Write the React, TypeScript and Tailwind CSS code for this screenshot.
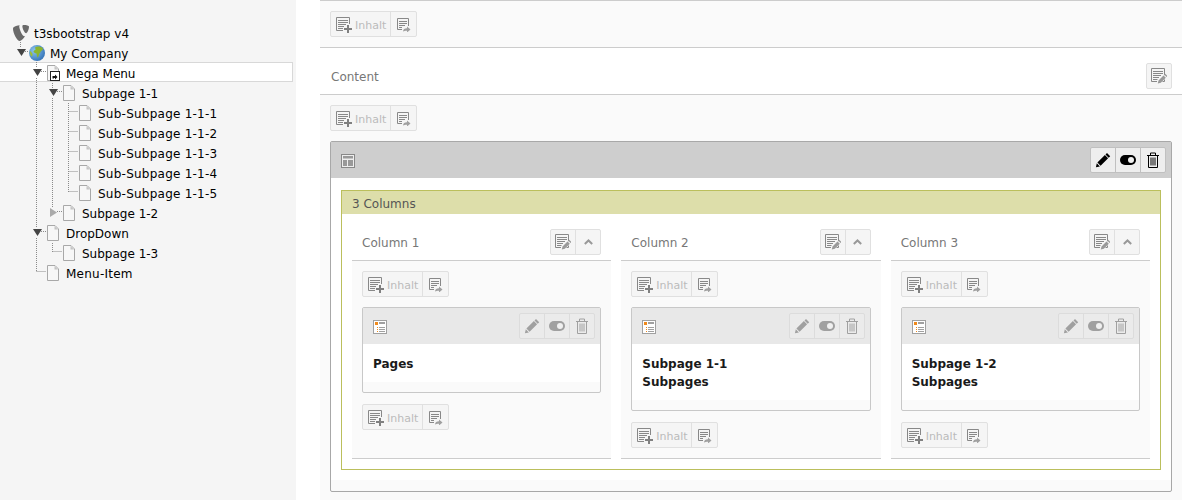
import type { ReactNode } from "react";

const font = "font-['DejaVu_Sans',sans-serif]";

const Lines = ({ size }: { size: number }) => (
  <>
    <path d={`M.5 .5h${size}v${size}h-${size}z`} fill="none" stroke="currentColor" />
    <path
      d={`M2 3.500h${size - 3}M2 5.500h${size - 3}M2 7.500h${size - 5}M2 9.500h${size - 7}M2 11.500h${size - 8}`}
      fill="none"
      stroke="currentColor"
    />
  </>
);

const NewIcon = () => (
  <svg width="16" height="16" viewBox="0 0 16 16" className="mt-[2px] text-[#888]">
    <Lines size={13} />
    <path d="M7 10h9v4H7zM10 7h4v9h-4z" fill="#f5f5f5" />
    <path d="M8 11h8v2H8zM11 8h2v8h-2z" fill="#808080" />
  </svg>
);

const PasteIcon = () => (
  <svg width="14" height="14" viewBox="0 0 14 14" className="mt-[2px] text-[#888]">
    <Lines size={11} />
    <path d="M5 8h9v6H5z" fill="#f5f5f5" />
    <path d="M6 13.500c.3-2.200 1.600-3.200 4-3.200V8.500l3.500 3-3.500 3v-1.700c-1.800 0-3 .2-4 .7z" fill="#a0a0a0" />
  </svg>
);

const EditDocIcon = () => (
  <svg width="16" height="16" viewBox="0 0 16 16" className="text-[#888]">
    <Lines size={13} />
    <path d="M6 12l6-6 4 3-6 6H6z" fill="#f5f5f5" />
    <path d="M12.500 7.500L14.800 9.800 9.800 14.800 6.800 15.500 7.500 12.500zM13.300 6.700l.9-.9 2.300 2.300-.9.9z" fill="#999" />
  </svg>
);

const ChevronUp = () => (
  <svg width="9" height="6" viewBox="0 0 9 6">
    <path d="M.8 5l3.700-3.500L8.200 5" fill="none" stroke="#999" strokeWidth="2" />
  </svg>
);

const Pencil = ({ className }: { className: string }) => (
  <svg width="16" height="16" viewBox="0 0 16 16" className={className}>
    <path
      d="M12 1l3.200 3.200-1.500 1.500-3.200-3.200zM9.900 3.100l3.200 3.200-7.500 7.500-3.200-3.200zM1.800 11.300l3.100 3.100-4 .9zM1.300 13.800l1.100 1.100-1.500.4z"
      fill="currentColor"
    />
  </svg>
);

const Toggle = ({ className }: { className: string }) => (
  <svg width="16" height="16" viewBox="0 0 16 16" className={className}>
    <rect x="0" y="3" width="16" height="10" rx="5" fill="currentColor" />
    <circle cx="11" cy="8" r="3" fill="#f0f0f0" />
  </svg>
);

const Trash = ({ className }: { className: string }) => (
  <svg width="16" height="16" viewBox="0 0 16 16" className={className}>
    <path
      d="M2 3.500h12M5.500 3.500v-2.500h5v2.500M3.500 3.500v12h9v-12M6 5.500v8M8 5.500v8M10 5.500v8"
      fill="none"
      stroke="currentColor"
    />
  </svg>
);

const GridIcon = () => (
  <svg width="14" height="14" viewBox="0 0 14 14" className="mt-[2px]">
    <rect x=".5" y=".5" width="13" height="13" fill="#eee" stroke="#888" />
    <path d="M2 2h10v2.500H2zM2 6h4v6H2zM7 6h5v6H7z" fill="#999" />
  </svg>
);

const ListIcon = () => (
  <svg width="14" height="14" viewBox="0 0 14 14" className="mt-[2px]">
    <rect x=".5" y=".5" width="13" height="13" fill="#fff" stroke="#a0a0a0" />
    <path d="M2 2h3v3H2z" fill="#f08a1c" />
    <path d="M4 7h1v1H4zM4 9h1v1H4zM4 11h1v1H4z" fill="#f08a1c" />
    <path d="M6 2.500h6M6 3.500h6M6 7.500h6M6 9.500h6M6 11.500h6" stroke="#a0a0a0" />
  </svg>
);

const Group = ({ children, tone = "light" }: { children: ReactNode; tone?: "light" | "dark" | "card" }) => {
  const toneClass = {
    light: "divide-[#e0e0e0] border-[#e0e0e0] bg-[#f5f5f5]",
    dark: "divide-[#c0c0c0] border-[#c0c0c0] bg-[#eeeeee]",
    card: "divide-[#dcdcdc] border-[#dcdcdc] bg-[#ebebeb]",
  }[tone];
  return <div className={`flex h-[26px] w-fit divide-x rounded-[2px] border ${toneClass}`}>{children}</div>;
};

const Cell = ({ children }: { children: ReactNode }) => (
  <div className="box-content flex w-[24px] items-center justify-center">{children}</div>
);

const AddBar = () => (
  <Group>
    <div className="flex w-[60px] items-center gap-[3px] pl-[5px]">
      <NewIcon />
      <span className="mt-[4px] text-[11px] text-[#bbbbbb]">Inhalt</span>
    </div>
    <div className="flex w-[25px] items-center justify-center">
      <PasteIcon />
    </div>
  </Group>
);

const cards = [
  { column: "Column 1", lines: ["Pages"] },
  { column: "Column 2", lines: ["Subpage 1-1", "Subpages"] },
  { column: "Column 3", lines: ["Subpage 1-2", "Subpages"] },
];

const Card = ({ lines }: { lines: string[] }) => (
  <div className="mt-[10px] rounded-[2px] border border-[#c8c8c8] bg-[#fafafa] pb-[10px]">
    <div className="flex h-[36px] items-center justify-between bg-[#e8e8e8] pl-[10px] pr-[5px]">
      <ListIcon />
      <Group tone="card">
        <Cell>
          <Pencil className="text-[#a0a0a0]" />
        </Cell>
        <Cell>
          <Toggle className="text-[#a0a0a0]" />
        </Cell>
        <Cell>
          <Trash className="text-[#a0a0a0]" />
        </Cell>
      </Group>
    </div>
    <div className="bg-white pb-[9px] pl-[10px] pt-[11px] text-xs font-bold leading-[18px] text-[#1a1a1a]">
      {lines.map((line) => (
        <div key={line}>{line}</div>
      ))}
    </div>
  </div>
);

const Column = ({ column, lines }: { column: string; lines: string[] }) => (
  <div className="flex flex-col">
    <div className="flex items-center justify-between border-b border-[#ccc] pb-[5px] pl-[10px] pr-[10px] pt-[15px]">
      <span className="mt-[2px] text-xs text-[#777]">{column}</span>
      <Group>
        <Cell>
          <EditDocIcon />
        </Cell>
        <Cell>
          <ChevronUp />
        </Cell>
      </Group>
    </div>
    <div className="flex-1 border-b border-[#ccc] bg-[#fafafa] px-[10px] pb-[10px] pt-[10px]">
      <AddBar />
      <Card lines={lines} />
      <div className="mt-[11px]">
        <AddBar />
      </div>
    </div>
  </div>
);

const Page = ({ shortcut }: { shortcut?: boolean }) => (
  <svg width="16" height="16" viewBox="0 0 16 16">
    <path d="M2.500.5h7.500l3.500 3.500v11.500h-11z" fill="#f7f7f7" stroke="#a8a8a8" />
    <path d="M9.500 1v3.500h3.500z" fill="#c4c4c4" />
    {shortcut && (
      <>
        <rect x="5.500" y="6.500" width="9" height="9" fill="#fff" stroke="#222" />
        <path d="M7.500 13.500v-2.500h2.500v-1.500l2.500 2.500-2.500 2.500v-1.500h-1v.5z" fill="#111" />
      </>
    )}
  </svg>
);

const Globe = () => (
  <svg width="16" height="16" viewBox="0 0 16 16">
    <defs>
      <radialGradient id="sea" cx="35%" cy="35%" r="75%">
        <stop offset="0%" stopColor="#8fc6ee" />
        <stop offset="100%" stopColor="#2f6fb5" />
      </radialGradient>
    </defs>
    <circle cx="8" cy="8" r="8" fill="url(#sea)" />
    <path
      d="M6 2.500c2-1.500 5.500-1.500 7.500.5 1 1.200 0 2.500-1.500 3-.5 1.500-1.500 2-2 3.500-.3 1.300-.5 2.500-1.500 3-.8-1-.5-2.800-1-4-1.500-.2-2.800-.8-3-2 .2-1.200 1.800-1.500 2.300-2.300C6.500 3.700 6 3.200 6 2.500z"
      fill="#8bb52e"
    />
    <path d="M1 6c1 .5 2 1.500 2.500 3 .2 1.200-.3 2-.8 2.500C1 10 .4 8 1 6z" fill="#9dbf3a" />
  </svg>
);

const Typo3 = () => (
  <svg width="16" height="16" viewBox="0.5 1 14.500 14.700" preserveAspectRatio="none">
    <path
      d="M11.500 11.200c-.2.1-.4.1-.6.1-1.900 0-4.700-6.600-4.700-8.800 0-.8.2-1.100.5-1.300C4.400 1.500 1.700 2.300.8 3.400c-.2.3-.3.7-.3 1.200 0 3.400 3.600 11.100 6.200 11.100 1.200 0 3.200-2 4.800-4.500zM10.300 1c2.300 0 4.700.4 4.700 1.700 0 2.700-1.700 5.900-2.600 5.900C10.900 8.600 9 4.300 9 2.200 9 1.300 9.400 1 10.300 1z"
      fill="#6a6a6a"
    />
  </svg>
);

const Arrow = ({ open }: { open: boolean }) =>
  open ? (
    <svg width="9" height="7" viewBox="0 0 9 7">
      <path d="M0 0h9L4.500 7z" fill="#444" />
    </svg>
  ) : (
    <svg width="7" height="9" viewBox="0 0 7 9">
      <path d="M0 0v9l7-4.500z" fill="#aaa" />
    </svg>
  );

type TreeRow = {
  label: string;
  depth: 0 | 1 | 2 | 3 | 4;
  icon: ReactNode;
  arrow?: "open" | "closed";
  selected?: boolean;
  spaced?: boolean;
};

const indent = ["pl-[13px]", "pl-[13px]", "pl-[29px]", "pl-[45px]", "pl-[61px]"];

const rows: TreeRow[] = [
  { label: "t3sbootstrap v4", depth: 0, icon: <Typo3 /> },
  { label: "My Company", depth: 1, icon: <Globe />, arrow: "open" },
  { label: "Mega Menu", depth: 2, icon: <Page shortcut />, arrow: "open", selected: true },
  { label: "Subpage 1-1", depth: 3, icon: <Page />, arrow: "open" },
  { label: "Sub-Subpage 1-1-1", depth: 4, icon: <Page />, spaced: true },
  { label: "Sub-Subpage 1-1-2", depth: 4, icon: <Page />, spaced: true },
  { label: "Sub-Subpage 1-1-3", depth: 4, icon: <Page />, spaced: true },
  { label: "Sub-Subpage 1-1-4", depth: 4, icon: <Page />, spaced: true },
  { label: "Sub-Subpage 1-1-5", depth: 4, icon: <Page />, spaced: true },
  { label: "Subpage 1-2", depth: 3, icon: <Page />, arrow: "closed" },
  { label: "DropDown", depth: 2, icon: <Page />, arrow: "open" },
  { label: "Subpage 1-3", depth: 3, icon: <Page /> },
  { label: "Menu-Item", depth: 2, icon: <Page />, spaced: true },
];

// dotted connectors of the page tree
const TreeLines = () => (
  <svg width="296" height="300" className="pointer-events-none absolute left-0 top-0">
    <path
      d="M20.500 42v5M25 51.500h4M36.500 62v6M36.500 78v150M36.500 238v34M41 71.500h5M41 231.500h5M36.500 271.500h10M52.500 83v5M52.500 98v110M57 91.500h5M57 211.500h5M52.500 243v9M52.500 251.500h10M68.500 103v89M68.500 111.500h9M68.500 131.500h9M68.500 151.500h9M68.500 171.500h9M68.500 191.500h9"
      fill="none"
      stroke="#8a8a8a"
      strokeDasharray="1 1"
    />
  </svg>
);

const Tree = () => (
  <div className="relative h-[500px] w-[296px] shrink-0 bg-[#f5f5f5] pt-[22px] text-xs text-black">
    {rows.map((row) => (
      <div
        key={row.label}
        className={`flex h-5 w-[293px] items-center border-y border-r ${indent[row.depth]} ${
          row.selected ? "border-[#d8d8d8] bg-white" : "border-transparent"
        }`}
      >
        {row.depth > 0 && (
          <span className="flex w-4 shrink-0 items-center justify-center">
            {row.arrow && <Arrow open={row.arrow === "open"} />}
          </span>
        )}
        <span className="mt-[2px] w-4 shrink-0">{row.icon}</span>
        <span className={`ml-[5px] mt-[3px] ${row.spaced ? "tracking-[0.24px]" : ""}`}>{row.label}</span>
      </div>
    ))}
    <TreeLines />
  </div>
);

export default function App() {
  return (
    <div className={`flex h-[500px] overflow-hidden bg-white ${font}`}>
      <Tree />
      <main className="ml-6 h-[500px] w-[862px] bg-[#fafafa]">
        <div className="border-y border-[#ccc] p-[10px]">
          <AddBar />
        </div>
        <div className="flex items-center justify-between border-b border-[#ccc] bg-white pb-[5px] pl-[11px] pr-[10px] pt-[15px]">
          <span className="mt-[2px] text-xs text-[#777]">Content</span>
          <Group>
            <Cell>
              <EditDocIcon />
            </Cell>
          </Group>
        </div>
        <div className="p-[10px]">
          <AddBar />
          <div className="mt-[10px] rounded-[2px] border border-[#a8a8a8] bg-[#fafafa] pb-[11px]">
            <div className="flex h-[36px] items-center justify-between bg-[#cecece] pl-[10px] pr-[5px]">
              <GridIcon />
              <Group tone="dark">
                <Cell>
                  <Pencil className="text-black" />
                </Cell>
                <Cell>
                  <Toggle className="text-black" />
                </Cell>
                <Cell>
                  <Trash className="text-black" />
                </Cell>
              </Group>
            </div>
            <div className="bg-white px-[10px] pb-[10px] pt-[12px]">
              <div className="border border-[#bbbf5c] pb-[10px]">
                <div className="flex h-[23px] items-center bg-[#dddeaa] pl-[10px] pt-[2px] text-xs text-[#555]">
                  3 Columns
                </div>
                <div className="grid grid-cols-3 gap-[10px] px-[10px]">
                  {cards.map((card) => (
                    <Column key={card.column} {...card} />
                  ))}
                </div>
              </div>
            </div>
          </div>
        </div>
      </main>
    </div>
  );
}
